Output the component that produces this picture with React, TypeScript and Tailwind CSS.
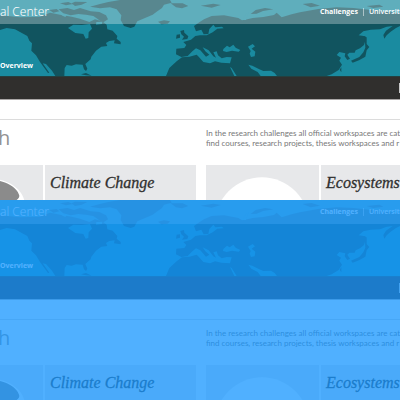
function WorldMap() {
  return (
    <svg
      className="absolute inset-0 h-full w-full"
      viewBox="0 0 1200 228"
      preserveAspectRatio="xMidYMin slice"
      aria-hidden="true"
    >
      <g fill="#11545f">
        {/* North America */}
        <path d="M0 46 L60 52 L120 50 L150 38 L180 44 L215 50 L240 56 L268 66 L285 58 L306 64 L320 74 L322 88 L338 92 L352 108 L350 116 L362 126 L362 133 L342 130 L344 121 L328 123 L318 129 L322 138 L304 140 L288 152 L274 170 L272 178 L256 192 L262 206 L258 213 L252 208 L248 194 L228 193 L215 197 L200 195 L194 204 L193 228 L166 228 L156 212 L138 192 L128 190 L148 218 L144 219 L120 186 L108 166 L94 152 L96 130 L88 122 L82 108 L60 96 L45 88 L20 84 L0 90 Z" />
        <path d="M180 10 L205 6 L218 12 L198 16 Z M225 5 L262 6 L245 14 L225 18 L215 10 Z M176 28 L202 24 L222 30 L240 24 L272 34 L298 36 L318 46 L324 58 L308 68 L292 56 L280 48 L258 44 L235 42 L212 46 L190 40 Z M148 30 L170 27 L178 34 L160 38 Z M243 223 L258 219 L275 227 L258 226 Z" />
        {/* Greenland and Iceland */}
        <path d="M270 20 L300 12 L325 6 L360 0 L510 0 L515 8 L492 14 L486 24 L472 34 L458 44 L435 54 L412 64 L403 80 L392 84 L372 78 L362 60 L364 46 L350 28 L330 22 L300 25 Z M474 65 L492 61 L510 64 L503 71 L484 73 Z" />
        {/* British Isles */}
        <path d="M541 93 L552 90 L553 98 L565 109 L562 117 L546 119 L552 110 L544 103 Z M530 104 L540 103 L540 113 L528 116 Z" />
        {/* Europe, Asia and the Middle East */}
        <path d="M582 78 L598 67 L612 58 L635 48 L672 46 L715 54 L726 61 L742 58 L758 54 L790 51 L822 45 L830 38 L845 52 L875 43 L900 37 L955 27 L1010 22 L1060 24 L1200 40 L1200 78 L1188 84 L1172 95 L1160 106 L1153 116 L1150 105 L1158 92 L1178 78 L1160 80 L1140 88 L1112 89 L1090 94 L1076 106 L1096 109 L1098 116 L1092 135 L1080 145 L1067 151 L1064 158 L1048 158 L1042 164 L1050 176 L1042 180 L1034 169 L1036 160 L1018 156 L1010 165 L1023 173 L1018 182 L1026 194 L1016 210 L995 223 L980 228 L831 228 L824 219 L813 212 L790 213 L778 208 L757 197 L745 194 L754 206 L773 216 L782 228 L710 228 L695 204 L690 201 L703 228 L498 228 L508 204 L530 184 L546 172 L568 170 L590 164 L596 170 L610 186 L630 190 L645 184 L664 188 L690 190 L695 172 L680 171 L665 175 L654 166 L650 154 L640 157 L648 173 L640 169 L626 151 L608 142 L616 154 L628 164 L618 170 L601 151 L588 145 L577 154 L563 168 L544 171 L528 163 L529 146 L553 144 L559 135 L550 126 L573 119 L586 108 L600 106 L620 106 L638 97 L652 86 L671 85 L666 80 L646 82 L640 74 L628 87 L625 102 L611 103 L604 89 L588 94 Z" />
        {/* Arctic islands */}
        <path d="M512 10 L548 10 L565 18 L546 25 L528 22 Z M602 17 L640 11 L662 15 L635 23 Z M752 42 L767 30 L795 24 L820 28 L789 33 L770 41 Z M908 12 L935 9 L960 17 L932 22 Z M1100 18 L1138 14 L1150 20 L1120 24 Z" />
        {/* Japan and Sakhalin */}
        <path d="M1094 110 L1100 112 L1100 132 L1108 141 L1100 151 L1096 170 L1077 181 L1058 188 L1053 182 L1078 171 L1090 157 L1096 143 Z M1019 209 L1024 202 L1024 217 Z" />
      </g>
      <g fill="#1a8ba0">
        <path d="M204 84 L220 74 L245 75 L270 72 L276 86 L266 97 L265 114 L257 116 L250 102 L226 99 Z M289 66 L307 65 L306 72 L288 74 Z M184 46 L202 43 L196 51 Z" />
        <path d="M670 147 L681 137 L689 142 L700 134 L707 143 L721 150 L716 155 L696 152 L680 156 L669 153 Z" />
        <path d="M744 140 L758 132 L765 139 L755 146 L766 155 L764 169 L753 171 L749 161 L752 153 Z M737 43 L745 38 L738 60 L728 60 Z" />
      </g>
    </svg>
  );
}

function ClimateArt() {
  return (
    <svg className="h-full w-full" viewBox="0 0 113 35" preserveAspectRatio="xMaxYMin slice" aria-hidden="true">
      <path d="M38 17 C53 9 72 13 81 18 C88 22 93 27 95 35 L38 35 Z" fill="#ffffff" />
      <path d="M38 20 C52 11 67 14 76 17 C84 20 89 25 90 30 C90 33 87 34 86 35 L38 35 Z" fill="#8b8b8b" />
    </svg>
  );
}

function EcosystemArt() {
  return (
    <svg className="h-full w-full" viewBox="0 0 113 35" preserveAspectRatio="xMidYMin slice" aria-hidden="true">
      <circle cx="56" cy="58" r="46" fill="#ffffff" />
    </svg>
  );
}

function Card({ title, art }: { title: string; art: React.ReactNode }) {
  return (
    <article className="flex h-9 w-[266px] shrink-0 gap-0.5">
      <div className="w-[113px] shrink-0 bg-[#e7e8ea]">{art}</div>
      <h2 className="grow bg-[#e7e8ea] px-[5px] py-2 font-['Liberation_Serif',serif] text-base leading-5 text-[#30302f] italic [-webkit-text-stroke:0.3px]">
        {title}
      </h2>
    </article>
  );
}

function Screen({ tinted = false }: { tinted?: boolean }) {
  return (
    <section className="relative h-[200px] overflow-hidden bg-white">
      <header className="relative h-[76px] overflow-hidden bg-[#1a8ba0] text-white">
        <WorldMap />
        <div className="relative flex h-6 items-center justify-between bg-white/30">
          <div className="font-['Noto_Sans',sans-serif] text-xs leading-4 font-light">al Center</div>
          <nav className="flex w-20 shrink-0 items-center gap-[5px] font-['Open_Sans',sans-serif] text-[7px] leading-3">
            <a href="#challenges" className="font-bold">Challenges</a>
            <span className="h-2 w-px shrink-0 bg-white/50" />
            <a href="#universities" className="font-semibold">Universities</a>
          </nav>
        </div>
        <a href="#overview" className="relative mt-9 block font-['Open_Sans',sans-serif] text-[7px] leading-3 font-bold">
          Overview
        </a>
      </header>
      <div className="flex h-6 items-center justify-end border-t border-b border-t-[#24403f] border-b-[#aaa7a6] bg-[#302f2d]">
        <input aria-label="Search" className="-mr-[79px] h-[10px] w-20 shrink-0 bg-[#c8c8c8]" />
      </div>
      <div className="mt-[19px] border-t border-[#dcdcdc]">
        <div className="flex h-[45px] pt-2">
          <h1 className="w-[206px] shrink-0 font-['Open_Sans',sans-serif] text-xl leading-5 font-medium text-[#929292]">
            <span className="-ml-0.5">h</span>
          </h1>
          <p className="font-['Lato',sans-serif] text-[8px] leading-[10px] whitespace-nowrap text-[#777777]">
            In the research challenges all official workspaces are cat
            <br />
            find courses, research projects, thesis workspaces and r
          </p>
        </div>
        <div className="-ml-[70px] flex gap-[10px]">
          <Card title="Climate Change" art={<ClimateArt />} />
          <Card title="Ecosystems" art={<EcosystemArt />} />
        </div>
      </div>
      {tinted && <div className="pointer-events-none absolute inset-0 bg-[#1596ff]/75" />}
    </section>
  );
}

export default function App() {
  return (
    <main className="overflow-hidden">
      <Screen />
      <Screen tinted />
    </main>
  );
}
